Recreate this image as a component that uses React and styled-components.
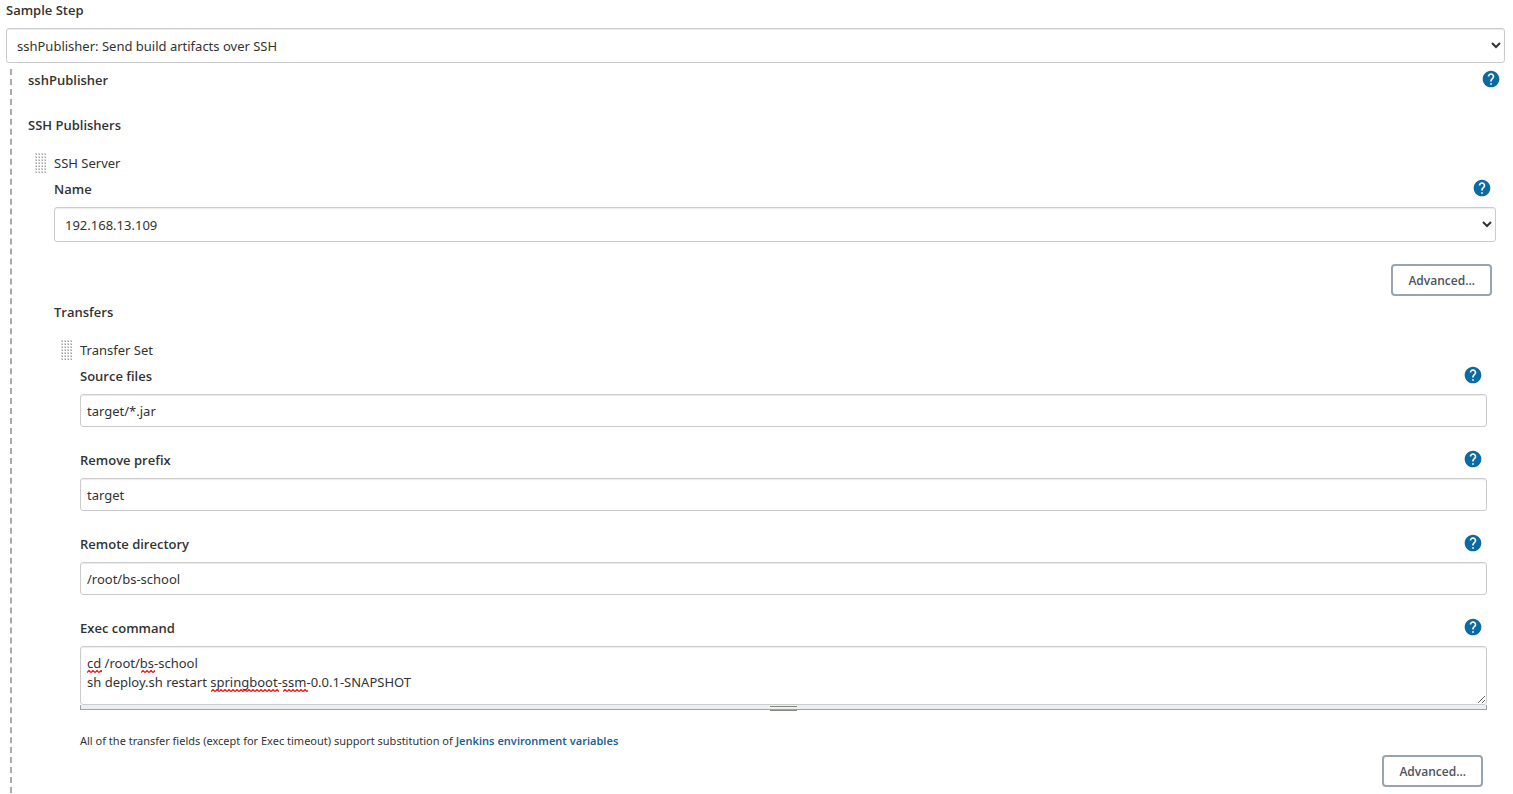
import styled, { createGlobalStyle } from "styled-components"
import { MdHelp } from "react-icons/md"

const SAMPLE_STEPS = ["sshPublisher: Send build artifacts over SSH"]
const SERVERS = ["192.168.13.109"]

const TRANSFER_FIELDS = [
  { id: "source-files", label: "Source files", value: "target/*.jar" },
  { id: "remove-prefix", label: "Remove prefix", value: "target" },
  { id: "remote-directory", label: "Remote directory", value: "/root/bs-school" },
]

const EXEC_COMMAND = "cd /root/bs-school\nsh deploy.sh restart springboot-ssm-0.0.1-SNAPSHOT"

// left edge, baseline and width of every underlined word
const SPELLING_MARKS = [
  { x: 7, y: 24, width: 15 },
  { x: 61, y: 24, width: 14 },
  { x: 131, y: 43, width: 68 },
  { x: 203, y: 43, width: 25 },
]

const Help = ({ topic }) => (
  <HelpButton type="button" aria-label={`Help for feature: ${topic}`}>
    <MdHelp size={20} />
  </HelpButton>
)

const Select = ({ id, options }) => (
  <SelectStyled id={id}>
    {options.map((option) => (
      <option key={option}>{option}</option>
    ))}
  </SelectStyled>
)

const Field = ({ id, label, children }) => (
  <FieldStyled>
    <LabelRow>
      <Label htmlFor={id}>{label}</Label>
      <Help topic={label} />
    </LabelRow>
    {children}
  </FieldStyled>
)

const Grip = () => (
  <GripStyled width="12" height="20" aria-hidden="true">
    <defs>
      <pattern id="grip-dots" width="3" height="3" patternUnits="userSpaceOnUse">
        <rect width="2" height="2" fill="#d8d8d8" />
        <rect x="1" y="1" width="1" height="1" fill="#a0a0a0" />
      </pattern>
    </defs>
    <rect width="12" height="20" fill="url(#grip-dots)" />
  </GripStyled>
)

const SpellingMarks = () => (
  <MarksStyled aria-hidden="true">
    <defs>
      <pattern id="squiggle" width="4" height="3" patternUnits="userSpaceOnUse">
        <path d="M0 2.5 L2 0.5 L4 2.5" fill="none" stroke="#f00" strokeWidth="1.2" />
      </pattern>
    </defs>
    {SPELLING_MARKS.map(({ x, y, width }) => (
      <g key={`${x}-${y}`} transform={`translate(${x} ${y})`}>
        <rect width={width} height="3" fill="url(#squiggle)" />
      </g>
    ))}
  </MarksStyled>
)

const TransferSet = () => (
  <Chunk>
    <ChunkTitle>
      <Grip />
      Transfer Set
    </ChunkTitle>
    {TRANSFER_FIELDS.map(({ id, label, value }) => (
      <Field key={id} id={id} label={label}>
        <Input id={id} type="text" defaultValue={value} />
      </Field>
    ))}
    <Field id="exec-command" label="Exec command">
      <Editor>
        <Textarea id="exec-command" spellCheck={false} defaultValue={EXEC_COMMAND} />
        <SpellingMarks />
        <ResizeHandle />
      </Editor>
    </Field>
    <Note>
      All of the transfer fields (except for Exec timeout) support substitution of{" "}
      <a href="#environment-variables">Jenkins environment variables</a>
    </Note>
    <Actions>
      <Button type="button">Advanced...</Button>
    </Actions>
  </Chunk>
)

const SshServer = () => (
  <Chunk>
    <ChunkTitle>
      <Grip />
      SSH Server
    </ChunkTitle>
    <Field id="server-name" label="Name">
      <Select id="server-name" options={SERVERS} />
    </Field>
    <Actions>
      <Button type="button">Advanced...</Button>
    </Actions>
    <TransfersHeading>Transfers</TransfersHeading>
    <TransferSet />
  </Chunk>
)

const App = () => (
  <>
    <GlobalStyle />
    <Page>
      <StepLabel htmlFor="sample-step">Sample Step</StepLabel>
      <Select id="sample-step" options={SAMPLE_STEPS} />
      <StepBody>
        <PublisherRow>
          <Heading>sshPublisher</Heading>
          <Help topic="sshPublisher" />
        </PublisherRow>
        <Heading>SSH Publishers</Heading>
        <SshServer />
      </StepBody>
    </Page>
  </>
)
export default App

const GlobalStyle = createGlobalStyle`
  * {
    box-sizing: border-box;
  }
  body {
    margin: 0;
    background: #fff;
    color: #333;
    font-family: "Noto Sans", "Open Sans", sans-serif;
    font-size: 13px;
    line-height: 22px;
  }
  button,
  input,
  select,
  textarea {
    color: inherit;
    font-family: inherit;
    font-size: inherit;
  }
`

const Page = styled.main`
  padding: 0 8px 0 6px;
`

const Label = styled.label`
  font-family: "Open Sans", sans-serif;
  font-weight: 600;
`

const StepLabel = styled(Label)`
  display: block;
  line-height: 20px;
  margin-bottom: 8px;
`

const Heading = styled.h2`
  margin: 0;
  font-family: "Open Sans", sans-serif;
  font-size: 13px;
  font-weight: 600;
`

const TransfersHeading = styled(Heading)`
  margin-top: 5px;
`

const SelectStyled = styled.select`
  display: block;
  width: 100%;
  height: 35px;
  padding: 0 6px;
  border: 1px solid #ccc;
  border-radius: 3px;
  background: #fff;
  box-shadow: inset 0 1px 1px rgba(0, 0, 0, 0.08);
`

const StepBody = styled.section`
  margin: 6px 0 0 4px;
  padding: 0 0 6px 16px;
  border-left: 2px dashed #aaa;
`

const LabelRow = styled.div`
  display: flex;
  align-items: center;
  justify-content: space-between;
  height: 22px;
  padding-right: 4px;
`

const PublisherRow = styled(LabelRow)`
  margin-bottom: 23px;
`

const HelpButton = styled.button`
  display: flex;
  height: 22px;
  padding: 0;
  border: 0;
  background: none;
  color: #0b6aa2;
  cursor: pointer;
`

const Chunk = styled.div`
  margin: 16px 9px 0 26px;
`

const ChunkTitle = styled.div`
  display: flex;
  align-items: center;
  gap: 7px;
  margin: 0 0 4px -19px;
`

const GripStyled = styled.svg`
  cursor: move;
`

const FieldStyled = styled.div`
  margin-bottom: 22px;

  ${LabelRow} {
    margin-bottom: 7px;
  }
`

const Input = styled.input`
  display: block;
  width: 100%;
  height: 33px;
  padding: 0 6px;
  border: 1px solid #ccc;
  border-radius: 3px;
  box-shadow: inset 0 1px 1px rgba(0, 0, 0, 0.08);
`

const Editor = styled.div`
  position: relative;
`

const Textarea = styled.textarea`
  display: block;
  width: 100%;
  height: 59px;
  padding: 7px 6px;
  border: 1px solid #ccc;
  border-radius: 3px;
  line-height: 19px;
  box-shadow: inset 0 1px 1px rgba(0, 0, 0, 0.08);
  overflow: hidden;
  resize: vertical;
`

const MarksStyled = styled.svg`
  position: absolute;
  inset: 0;
  width: 100%;
  height: 59px;
  pointer-events: none;
`

const ResizeHandle = styled.div`
  display: flex;
  justify-content: center;
  height: 5px;
  border: 1px solid #98a4ac;
  border-top: 0;
  background: #eaeff2;
  cursor: row-resize;

  &::after {
    content: "";
    width: 27px;
    height: 3px;
    margin-top: 1px;
    border: 1px solid #888b84;
    border-width: 1px 0;
  }
`

const Note = styled.div`
  font-size: 11px;
  line-height: 18px;
  margin-bottom: 5px;

  a {
    color: #1f6499;
    font-weight: 600;
    text-decoration: none;
  }
`

const Actions = styled.div`
  display: flex;
  justify-content: flex-end;
  padding-right: 4px;
`

const Button = styled.button`
  height: 32px;
  padding: 0 15px;
  border: 2px solid #98a5b1;
  border-radius: 4px;
  background: #fff;
  color: #4d545d;
  font-family: "Open Sans", sans-serif;
  font-size: 12px;
  font-weight: 600;
  cursor: pointer;
`
